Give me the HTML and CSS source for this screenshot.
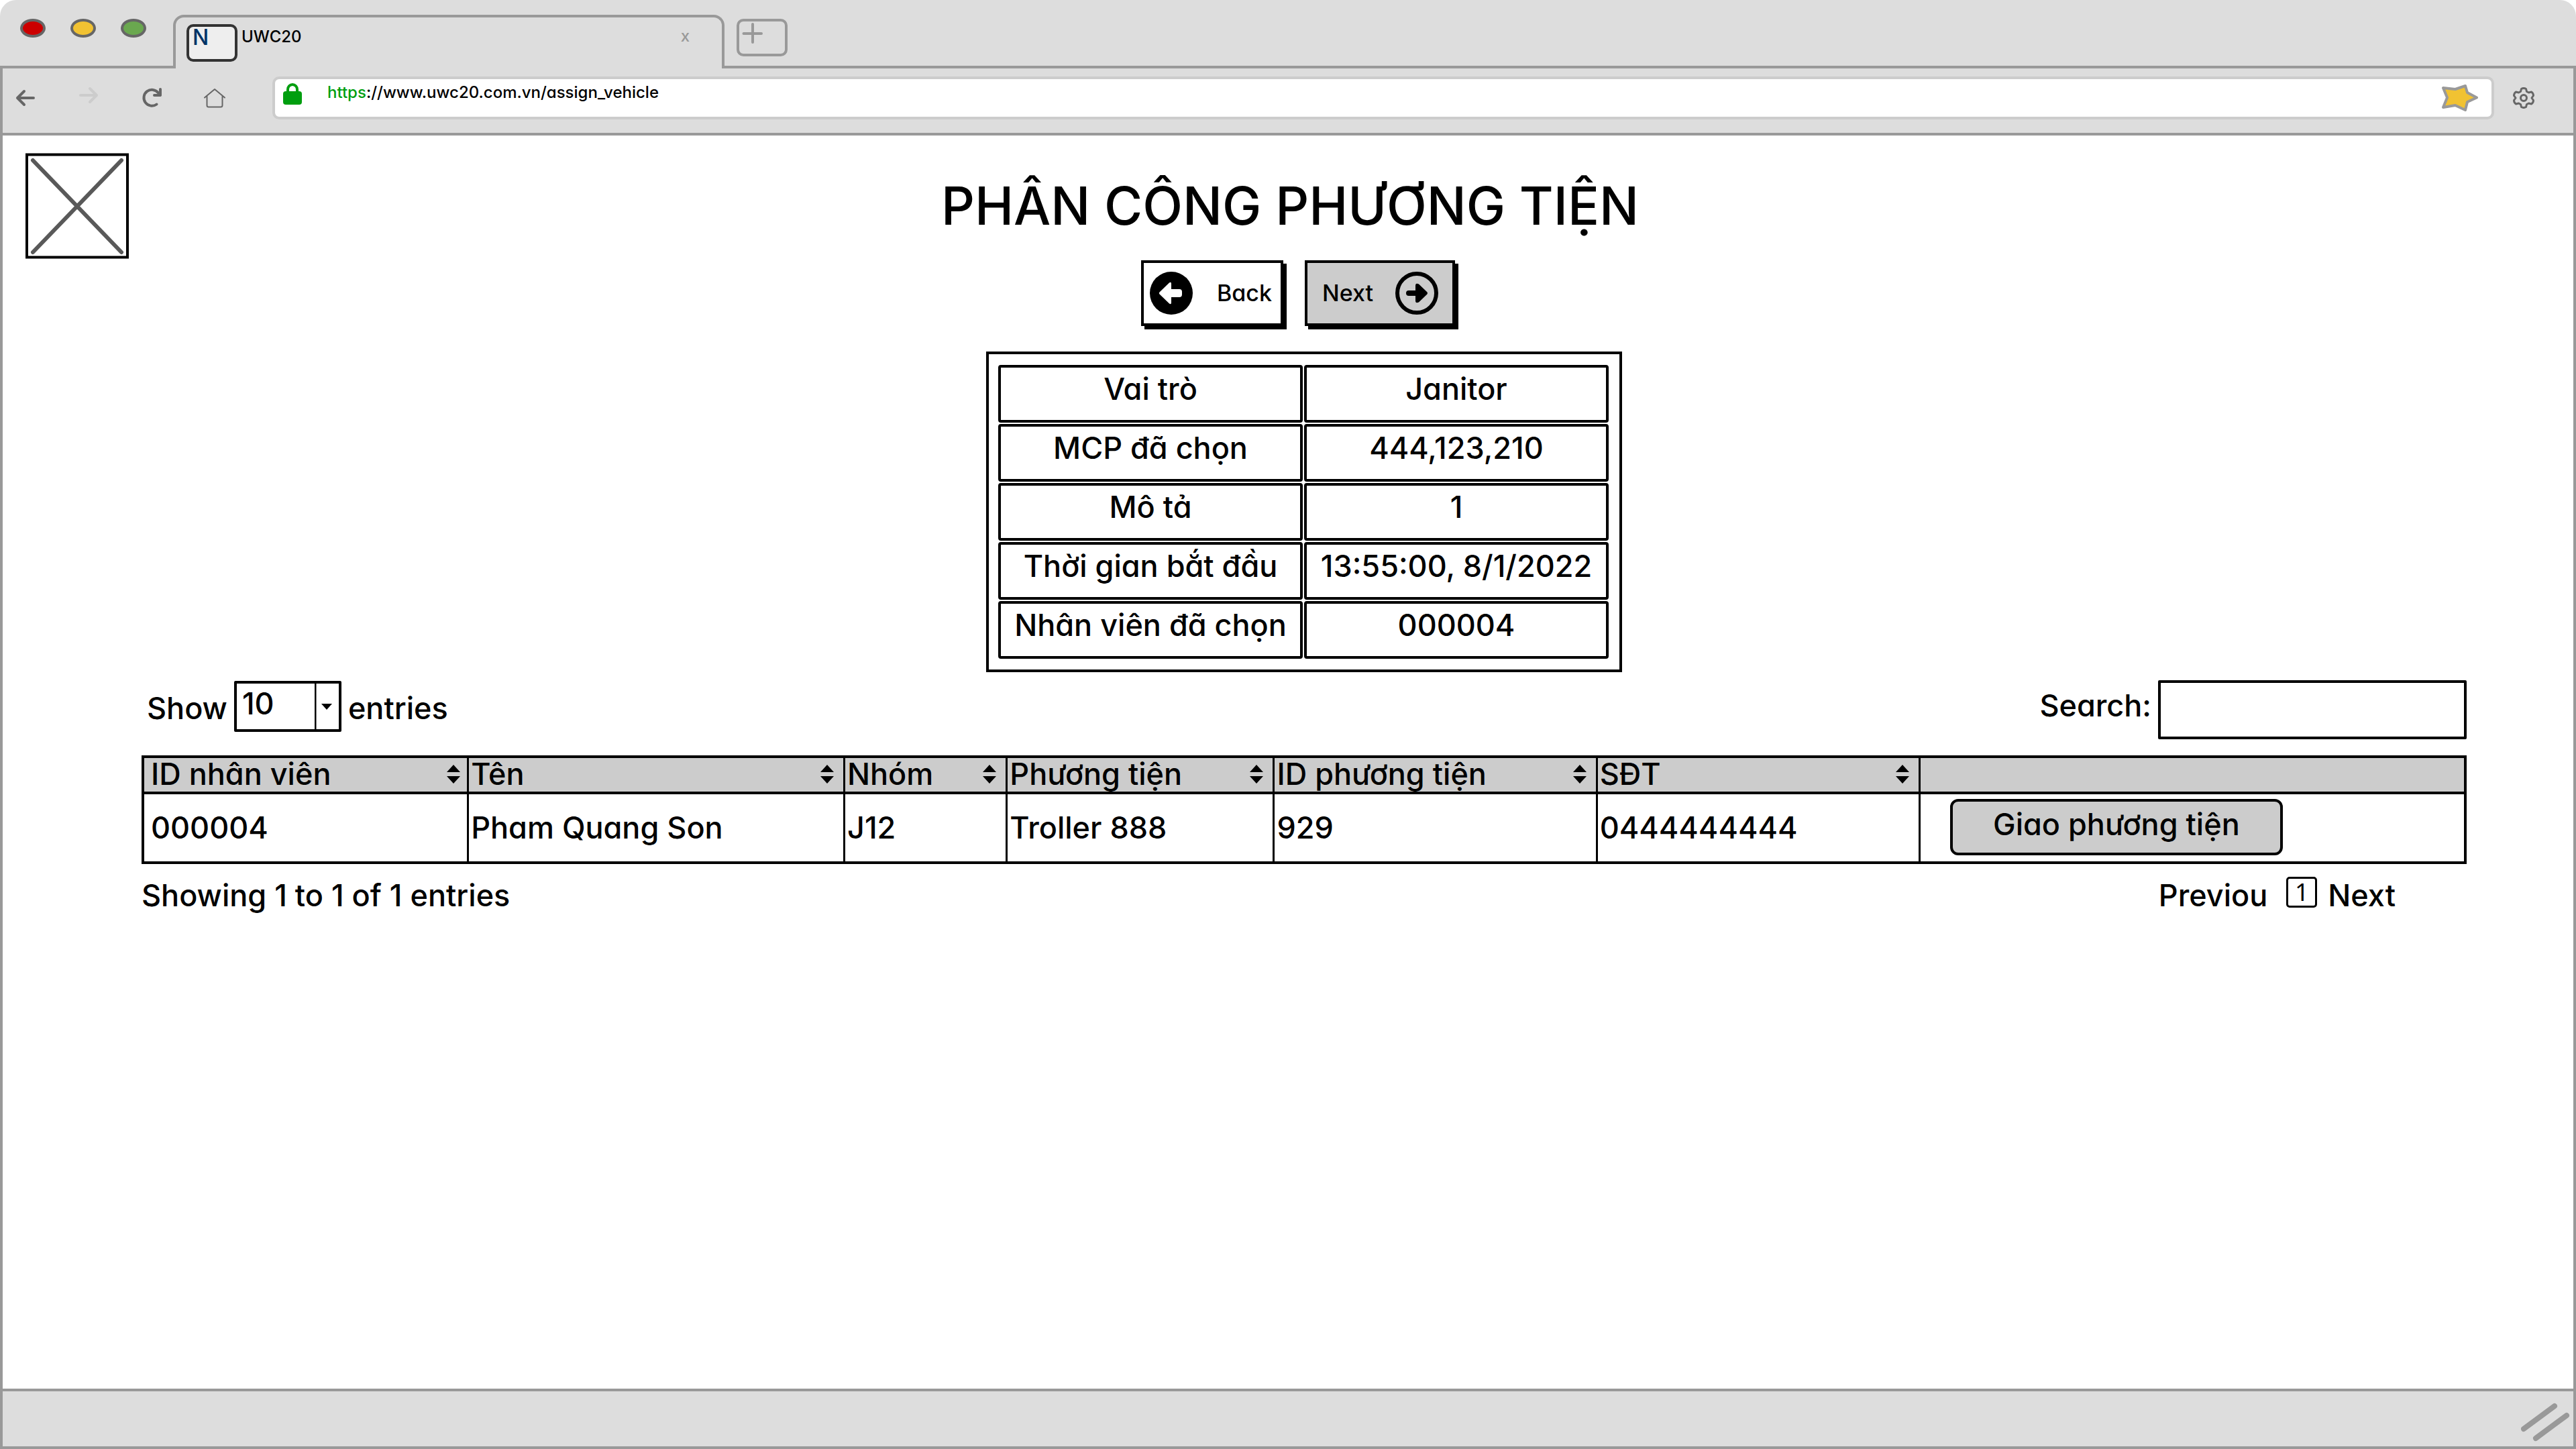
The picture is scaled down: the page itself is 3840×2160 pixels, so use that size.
FILE: index.html
```html
<!DOCTYPE html>
<html lang="vi">
<head>
<meta charset="utf-8">
<meta name="viewport" content="width=device-width, initial-scale=1">
<title>UWC20</title>
<link rel="stylesheet" href="styles.css">
</head>
<body>
<div class="window">
  <div class="tabstrip">
    <div class="lights">
      <button class="light light-close" aria-label="Close window"></button>
      <button class="light light-min" aria-label="Minimize window"></button>
      <button class="light light-max" aria-label="Maximize window"></button>
    </div>
    <div class="tab">
      <span class="favicon">N</span>
      <span class="tab-title">UWC20</span>
      <button class="tab-close" aria-label="Close tab">x</button>
    </div>
    <button class="tab-new" aria-label="New tab">
      <svg width="68" height="48" viewBox="0 0 68 48"><path d="M6.500 18H33M20 4V31" fill="none" stroke="#999" stroke-width="4" stroke-linecap="round"/></svg>
    </button>
  </div>

  <div class="toolbar">
    <button class="nav" aria-label="Back">
      <svg width="40" height="40" viewBox="0 0 40 40"><path d="M18 10L8 20L18 30M8 20H32" fill="none" stroke="#666" stroke-width="4" stroke-linecap="round" stroke-linejoin="round"/></svg>
    </button>
    <button class="nav" aria-label="Forward">
      <svg width="40" height="40" viewBox="0 0 40 40"><path d="M22 6L32 16L22 26M32 16H8" fill="none" stroke="#ccc" stroke-width="4" stroke-linecap="round" stroke-linejoin="round"/></svg>
    </button>
    <button class="nav" aria-label="Reload">
      <svg width="40" height="40" viewBox="0 0 40 40"><path d="M27.500 29.500A12 12 0 1 1 30 12.500L33 16M33 7V16H24" fill="none" stroke="#666" stroke-width="4" stroke-linecap="round" stroke-linejoin="round"/></svg>
    </button>
    <button class="nav" aria-label="Home">
      <svg width="40" height="40" viewBox="0 0 40 40"><path d="M5 19.500L20 7L35 19.500M8.500 17V31Q8.500 33.500 11 33.500H29Q31.500 33.500 31.500 31V17" fill="none" stroke="#666" stroke-width="2" stroke-linecap="round" stroke-linejoin="round"/></svg>
    </button>
    <div class="address">
      <svg width="28" height="32" viewBox="0 0 28 32"><path d="M7 14V9.500A7 7.500 0 0 1 21 9.500V14" fill="none" stroke="#009e0f" stroke-width="4"/><rect y="12" width="28" height="20" rx="4" fill="#009e0f"/></svg>
      <label class="scheme" for="url">https</label>
      <input class="url" id="url" type="text" value="://www.uwc20.com.vn/assign_vehicle">
      <button class="icon-button star" aria-label="Bookmark">
        <svg width="56" height="44" viewBox="0 0 56 44"><path d="M4 7L22 9L37 4L40 14L54 21.500L40 28L37 40L22 33L4 36L10 21.500Z" fill="#f1c232" stroke="#999" stroke-width="4" stroke-linejoin="round"/></svg>
      </button>
    </div>
    <button class="icon-button" aria-label="Settings">
      <svg width="32" height="32" viewBox="0 0 32 32"><path d="M12.500 2.500Q16 .5 19.500 2.500L20.500 6.500L23.500 8L27.500 7Q30.500 9 30.500 12.500L28 16L30.500 19.500Q30.500 23 27.500 25L23.500 24L20.500 25.500L19.500 29.500Q16 31.500 12.500 29.500L11.500 25.500L8.500 24L4.500 25Q1.500 23 1.500 19.500L4 16L1.500 12.500Q1.500 9 4.500 7L8.500 8L11.500 6.500Z" fill="none" stroke="#666" stroke-width="3" stroke-linejoin="round"/><circle cx="16" cy="16" r="4.500" fill="none" stroke="#666" stroke-width="3"/></svg>
    </button>
  </div>

  <main class="page">
    <header class="page-head">
      <svg class="logo" width="154" height="158" viewBox="0 0 154 158" role="img" aria-label="Logo"><rect x="2" y="2.500" width="150" height="153" fill="#fff" stroke="#000" stroke-width="4"/><path d="M11 11L143 148M143 11L11 148" stroke="#595959" stroke-width="6" stroke-linecap="round"/></svg>
      <h1 class="title">PHÂN CÔNG PHƯƠNG TIỆN</h1>
    </header>

    <nav class="steps">
      <button class="step step-back">
        <svg width="64" height="64" viewBox="0 0 64 64"><circle cx="32" cy="32" r="32"/><path d="M14.500 30.500L29 16.500Q32 14.500 32 18V26H44Q48 26 48 30V34Q48 38 44 38H32V46Q32 49.500 29 47.500L14.500 33.500Q13 32 14.500 30.500Z" fill="#fff"/></svg>
        <span>Back</span>
      </button>
      <button class="step step-next">
        <span>Next</span>
        <svg width="64" height="64" viewBox="0 0 64 64"><circle cx="32" cy="32" r="29" fill="none" stroke="#000" stroke-width="6"/><path d="M47.500 30.500L35 18.500Q30 16 30 21V28H20Q16 28 16 32Q16 36 20 36H30V43Q30 48 35 45.500L47.500 33.500Q48.500 32 47.500 30.500Z"/></svg>
      </button>
    </nav>

    <section class="content">
      <table class="summary">
        <tr><th scope="row">Vai trò</th><td>Janitor</td></tr>
        <tr><th scope="row">MCP đã chọn</th><td>444,123,210</td></tr>
        <tr><th scope="row">Mô tả</th><td>1</td></tr>
        <tr><th scope="row">Thời gian bắt đầu</th><td>13:55:00, 8/1/2022</td></tr>
        <tr><th scope="row">Nhân viên đã chọn</th><td>000004</td></tr>
      </table>

      <div class="controls">
        <div class="length">
          <label for="length">Show</label>
          <span class="select-wrap">
            <select class="select" id="length"><option>10</option><option>25</option><option>50</option></select>
            <svg class="select-arrow" width="36" height="68" viewBox="0 0 36 68"><path d="M1 0V68" stroke="#000" stroke-width="3"/><path d="M10 30H26L18 39Z"/></svg>
          </span>
          <span>entries</span>
        </div>
        <div class="search">
          <label for="search">Search:</label>
          <input class="search-box" id="search" type="text">
        </div>
      </div>

      <table class="data">
        <colgroup><col class="c-id"><col class="c-name"><col class="c-group"><col class="c-vehicle"><col class="c-wide"><col class="c-wide"><col></colgroup>
        <thead>
          <tr>
            <th><div class="head">ID nhân viên<svg width="20" height="28" viewBox="0 0 20 28"><path d="M10 0L20 11H0ZM10 28L20 17H0Z"/></svg></div></th>
            <th><div class="head">Tên<svg width="20" height="28" viewBox="0 0 20 28"><path d="M10 0L20 11H0ZM10 28L20 17H0Z"/></svg></div></th>
            <th><div class="head">Nhóm<svg width="20" height="28" viewBox="0 0 20 28"><path d="M10 0L20 11H0ZM10 28L20 17H0Z"/></svg></div></th>
            <th><div class="head">Phương tiện<svg width="20" height="28" viewBox="0 0 20 28"><path d="M10 0L20 11H0ZM10 28L20 17H0Z"/></svg></div></th>
            <th><div class="head">ID phương tiện<svg width="20" height="28" viewBox="0 0 20 28"><path d="M10 0L20 11H0ZM10 28L20 17H0Z"/></svg></div></th>
            <th><div class="head">SĐT<svg width="20" height="28" viewBox="0 0 20 28"><path d="M10 0L20 11H0ZM10 28L20 17H0Z"/></svg></div></th>
            <th></th>
          </tr>
        </thead>
        <tbody>
          <tr>
            <td>000004</td><td>Pham Quang Son</td><td>J12</td><td>Troller 888</td><td>929</td><td>0444444444</td>
            <td class="action"><button class="assign">Giao phương tiện</button></td>
          </tr>
        </tbody>
      </table>

      <div class="table-foot">
        <span>Showing 1 to 1 of 1 entries</span>
        <nav class="pager"><a href="#">Previou</a><a class="current" href="#">1</a><a href="#">Next</a></nav>
      </div>
    </section>
  </main>

  <footer class="statusbar">
    <svg width="74" height="60" viewBox="0 0 74 60"><path d="M4 40L50 6M22 54L68 20" stroke="#999" stroke-width="8" stroke-linecap="round"/></svg>
  </footer>
</div>
</body>
</html>
```
FILE: styles.css
```css
* { box-sizing: border-box; }

body {
  margin: 0;
  background: #fff;
  color: #000;
  font: 500 45px/56px Inter, "Noto Sans", sans-serif;
  font-feature-settings: "cv11";
}

button, input, select { font: inherit; font-feature-settings: inherit; color: inherit; }
button { padding: 0; border: 0; background: none; }
svg { display: block; flex: none; }
a { color: inherit; text-decoration: none; }

.window { display: flex; flex-direction: column; min-height: 100vh; }

/* Browser tabs */
.tabstrip {
  display: flex;
  height: 102px;
  padding-left: 30px;
  background: #ddd linear-gradient(#999, #999) bottom / 100% 4px no-repeat;
  border-radius: 24px 24px 0 0;
  font-size: 24px;
  line-height: 32px;
}
.lights { display: flex; gap: 37px; width: 228px; padding-top: 28px; }
.light { width: 38px; height: 28px; border: 4px solid #666; border-radius: 50%; }
.light-close { background: #c00; }
.light-min { background: #f1c232; }
.light-max { background: #6aa84f; }
.tab {
  display: flex;
  align-items: flex-start;
  gap: 6px;
  width: 822px;
  margin-top: 22px;
  padding: 10px 48px 0 16px;
  border: 4px solid #999;
  border-bottom: 0;
  border-radius: 16px 16px 0 0;
  background: #ddd;
}
.favicon {
  width: 76px;
  height: 56px;
  padding-left: 5px;
  border: 4px solid #333;
  border-radius: 10px;
  background: #eee;
  color: #036;
  font-size: 32px;
}
.tab-title { flex: 1; padding-top: 3px; }
.tab-close { padding-top: 2px; color: #999; }
.tab-new { width: 76px; height: 56px; margin: 28px 0 0 18px; border: 4px solid #999; border-radius: 10px; }

/* Address bar */
.toolbar {
  display: flex;
  align-items: center;
  height: 100px;
  padding: 0 58px 8px 14px;
  border: solid #999;
  border-width: 0 4px 4px;
  background: #ddd;
}
.nav { margin-right: 54px; }
.nav:nth-child(4) { margin-right: 66px; }
.address {
  display: flex;
  flex: 1;
  align-items: flex-start;
  height: 64px;
  margin-right: 28px;
  padding: 6px 20px 0 12px;
  border: 4px solid #ccc;
  border-radius: 10px;
  background: #fff;
  font-size: 24px;
  line-height: 28px;
}
.scheme { margin-left: 38px; color: #009e0f; }
.url { flex: 1; height: 28px; padding: 0; border: 0; outline: 0; background: none; }

/* Page */
.page { flex: 1; border: solid #999; border-width: 0 4px; background: #fff; }
.page-head {
  display: grid;
  grid-template-columns: 1fr auto 1fr;
  align-items: center;
  padding: 26px 28px 0 34px;
}
.title { margin: 0; font-size: 78px; font-weight: 500; line-height: 96px; }
.steps { display: flex; justify-content: center; gap: 32px; padding: 2px 0 0 30px; font-size: 34px; line-height: 40px; }
.step {
  display: flex;
  align-items: center;
  justify-content: space-between;
  height: 98px;
  border: 4px solid #000;
  box-shadow: 5px 5px #000;
}
.step-back { width: 212px; padding: 0 13px 0 9px; }
.step-next { width: 224px; padding: 0 21px 0 22px; background: #ccc; }
.content { padding: 38px 159px 0 207px; }

.summary {
  width: 948px;
  margin: 0 auto;
  padding: 14px 14px 14px 12px;
  border: 4px solid #000;
  border-spacing: 2px;
  text-align: center;
}
.summary th, .summary td {
  width: 50%;
  height: 86px;
  padding: 0 0 14px;
  border: 4px solid #000;
  border-radius: 4px;
  font-weight: 500;
  white-space: nowrap;
}

.controls { display: flex; justify-content: space-between; margin-top: 12px; }
.length { display: flex; align-items: center; gap: 10px; padding: 0 0 4px 8px; }
.select-wrap { position: relative; margin-top: -6px; }
.select {
  display: block;
  width: 160px;
  height: 76px;
  padding: 0 0 8px 8px;
  border: 4px solid #000;
  border-radius: 2px;
  background: #fff;
  appearance: none;
}
.select-arrow { position: absolute; top: 4px; right: 4px; pointer-events: none; }
.search { display: flex; gap: 10px; line-height: 76px; }
.search-box { width: 460px; height: 88px; border: 4px solid #000; border-radius: 2px; background: #fff; }

.data {
  width: 100%;
  margin-top: 24px;
  border: 4px solid #000;
  border-collapse: collapse;
  table-layout: fixed;
  text-align: left;
}
.data th, .data td { padding: 0 0 0 3px; border-left: 3px solid #000; font-weight: 500; }
.data th:first-child, .data td:first-child { padding-left: 10px; }
.data th { height: 54px; padding-bottom: 2px; border-bottom: 4px solid #000; background: #ccc; line-height: 48px; }
.data td { height: 104px; }
.data .action { padding: 0 0 2px 44px; }
.c-id { width: 14%; }
.c-name { width: 16.2%; }
.c-group { width: 7%; }
.c-vehicle { width: 11.5%; }
.c-wide { width: 13.9%; }
.head { display: flex; align-items: center; justify-content: space-between; padding-right: 14px; }
.data th:first-child .head { padding-right: 10px; }
.assign {
  display: block;
  width: 496px;
  height: 84px;
  padding-bottom: 8px;
  border: 4px solid #000;
  border-radius: 12px;
  background: #ccc;
}

.table-foot { display: flex; justify-content: space-between; margin-top: 19px; }
.pager { display: flex; padding-right: 106px; }
.current {
  width: 46px;
  height: 46px;
  margin: 0 16px 0 28px;
  border: 3px solid #000;
  border-radius: 5px;
  font: 36px/40px "Noto Sans", sans-serif;
  text-align: center;
}

.statusbar {
  display: flex;
  align-items: flex-end;
  justify-content: flex-end;
  height: 90px;
  padding: 0 4px 6px;
  border: 4px solid #999;
  background: #ddd;
}
```
